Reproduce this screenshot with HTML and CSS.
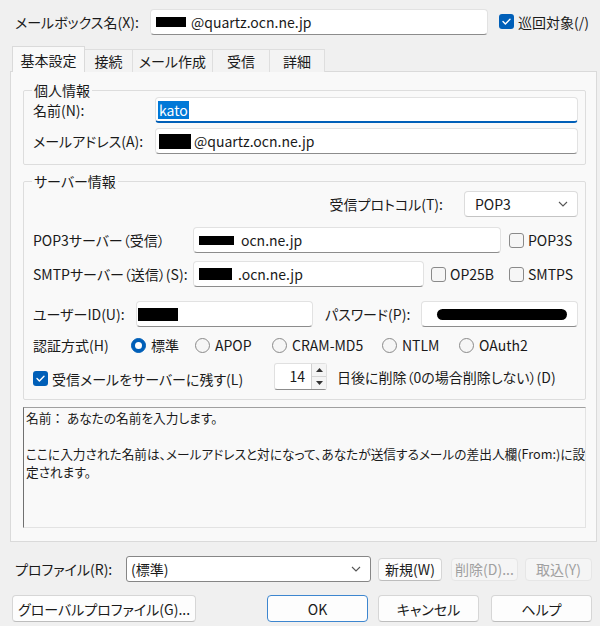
FILE: index.html
```html
<!DOCTYPE html>
<html lang="ja">
<head>
<meta charset="utf-8">
<title>メールボックス</title>
<link rel="stylesheet" href="styles.css">
</head>
<body>
<div class="top-row">
  <span class="mb-lbl">メールボックス名(X):</span>
  <div class="field mb-field"><span class="redact r-mb"></span>@quartz.ocn.ne.jp</div>
  <div class="chk top-chk"><span class="cb on"><svg viewBox="0 0 15 15" width="15" height="15"><polyline points="4,7.6 6.4,10 11,5.2" fill="none" stroke="#fff" stroke-width="1.4" stroke-linecap="round" stroke-linejoin="round"/></svg></span><span>巡回対象(/)</span></div>
</div>

<div class="tabs">
  <div class="tab active">基本設定</div>
  <div class="tab t-conn">接続</div>
  <div class="tab t-comp">メール作成</div>
  <div class="tab t-recv">受信</div>
  <div class="tab t-det">詳細</div>
</div>

<div class="panel">
  <fieldset class="group g1">
    <legend>個人情報</legend>
    <div class="row r-name">
      <span class="lbl w-name">名前(N):</span>
      <div class="field focus grow p-name"><span class="sel">kato</span></div>
    </div>
    <div class="row r-addr">
      <span class="lbl w-name">メールアドレス(A):</span>
      <div class="field grow p-addr"><span class="redact r-addr-b"></span>@quartz.ocn.ne.jp</div>
    </div>
  </fieldset>

  <fieldset class="group g2">
    <legend>サーバー情報</legend>
    <div class="row r-proto">
      <span class="lbl">受信プロトコル(T):</span>
      <div class="select proto-sel"><span>POP3</span><svg class="chev" viewBox="0 0 10 6" width="10" height="6"><polyline points="1,1 5,5 9,1" fill="none" stroke="#555" stroke-width="1.1"/></svg></div>
    </div>
    <div class="row r-pop">
      <span class="lbl w-srv">POP3サーバー（受信）</span>
      <div class="field pop-field"><span class="redact r-pop-b"></span>ocn.ne.jp</div>
      <div class="chk pop3s"><span class="cb"></span><span>POP3S</span></div>
    </div>
    <div class="row r-smtp">
      <span class="lbl w-srv">SMTPサーバー（送信）(S):</span>
      <div class="field smtp-field"><span class="redact r-smtp-b"></span>.ocn.ne.jp</div>
      <div class="chk op25b"><span class="cb"></span><span>OP25B</span></div>
      <div class="chk"><span class="cb"></span><span>SMTPS</span></div>
    </div>
    <div class="row r-user">
      <span class="lbl w-user">ユーザーID(U):</span>
      <div class="field user-field"><span class="redact r-user-b"></span></div>
      <span class="lbl w-pass">パスワード(P):</span>
      <div class="field pass-field"><span class="redact r-pass-b"></span></div>
    </div>
    <div class="row r-auth">
      <span class="lbl w-auth">認証方式(H)</span>
      <div class="radio w-r1"><span class="rb on"></span><span>標準</span></div>
      <div class="radio w-r2"><span class="rb"></span><span>APOP</span></div>
      <div class="radio w-r3"><span class="rb"></span><span>CRAM-MD5</span></div>
      <div class="radio w-r4"><span class="rb"></span><span>NTLM</span></div>
      <div class="radio"><span class="rb"></span><span>OAuth2</span></div>
    </div>
    <div class="row r-leave">
      <div class="chk w-leave"><span class="cb on"><svg viewBox="0 0 15 15" width="15" height="15"><polyline points="4,7.6 6.4,10 11,5.2" fill="none" stroke="#fff" stroke-width="1.4" stroke-linecap="round" stroke-linejoin="round"/></svg></span><span>受信メールをサーバーに残す(L)</span></div>
      <div class="spin">
        <div class="spin-val">14</div>
        <div class="spin-btns">
          <div class="spin-btn"><svg viewBox="0 0 7 4" width="7" height="4"><polygon points="0,4 3.5,0 7,4" fill="#333"/></svg></div>
          <div class="spin-btn"><svg viewBox="0 0 7 4" width="7" height="4"><polygon points="0,0 3.5,4 7,0" fill="#333"/></svg></div>
        </div>
      </div>
      <span class="lbl days">日後に削除（0の場合削除しない）(D)</span>
    </div>
  </fieldset>

  <div class="desc">
    <div class="desc-line"><span class="colon">名前：</span> あなたの名前を入力します。</div>
    <div class="desc-line">&nbsp;</div>
    <div class="desc-line">ここに入力された名前は、メールアドレスと対になって、あなたが送信するメールの差出人欄(From:)に設</div>
    <div class="desc-line">定されます。</div>
  </div>
</div>

<div class="profile-row">
  <span class="lbl w-prof">プロファイル(R):</span>
  <div class="select prof-sel"><span>(標準)</span><svg class="chev" viewBox="0 0 10 6" width="10" height="6"><polyline points="1,1 5,5 9,1" fill="none" stroke="#555" stroke-width="1.1"/></svg></div>
  <div class="btn small b-new">新規(W)</div>
  <div class="btn small disabled b-del">削除(D)...</div>
  <div class="btn small disabled b-imp">取込(Y)</div>
</div>

<div class="button-row">
  <div class="btn b-global">グローバルプロファイル(G)...</div>
  <div class="btn default b-ok">OK</div>
  <div class="btn b-cancel">キャンセル</div>
  <div class="btn b-help">ヘルプ</div>
</div>
</body>
</html>
```

FILE: styles.css
```css
* { box-sizing: border-box; }
html, body { margin: 0; padding: 0; }
body {
  width: 600px;
  height: 626px;
  overflow: hidden;
  background: #f0f0f0;
  color: #1a1a1a;
  font-family: "Noto Sans CJK JP", sans-serif;
  font-size: 14px;
  line-height: 18px;
  font-feature-settings: "palt" 1;
}

/* top row */
.top-row { display: flex; align-items: center; height: 27px; margin-top: 8px; padding-left: 15px; }
.mb-lbl { width: 135px; white-space: nowrap; }
.mb-field { width: 338px; padding-left: 5px; }
.top-chk { margin-left: 11px; }

/* generic controls */
.field {
  display: flex;
  align-items: center;
  height: 26px;
  background: #fff;
  border: 1px solid #e2e2e2;
  border-bottom-color: #8c8c8c;
  border-radius: 4px;
  white-space: nowrap;
  overflow: hidden;
  padding-left: 5px;
}
.field.focus { border-bottom: 2px solid #005fb8; }
.grow { flex: 1; }
.redact { display: inline-block; background: #000; margin-right: 5px; }
.r-mb { width: 30px; height: 10px; }
.r-addr-b { width: 32px; height: 15px; margin-right: 3px; }
.r-pop-b { width: 35px; height: 9px; margin-right: 7px; }
.r-smtp-b { width: 33px; height: 12px; margin-right: 6px; }
.r-user-b { width: 40px; height: 13px; }
.r-pass-b { width: 130px; height: 11px; border-radius: 6px; }
.sel { background: #0078d7; color: #fff; padding: 0 1px; line-height: 18px; }

.lbl { white-space: nowrap; }
.chk, .radio { display: flex; align-items: center; white-space: nowrap; }
.chk .cb { margin-right: 4px; }
.cb {
  width: 15px; height: 15px;
  border: 1px solid #8a8a8a;
  border-radius: 3px;
  background: #f6f6f6;
  display: inline-flex;
  flex: none;
}
.cb.on { background: #005fb8; border: none; }
.cb svg { display: block; }
.rb {
  width: 15px; height: 15px;
  border: 1px solid #8a8a8a;
  border-radius: 50%;
  background: #f6f6f6;
  margin-right: 5px;
  display: flex; align-items: center; justify-content: center;
  flex: none;
}
.rb.on { background: #005fb8; border-color: #005fb8; }
.rb.on::after { content: ""; width: 7px; height: 7px; border-radius: 50%; background: #fff; }

.select {
  display: flex; align-items: center; justify-content: space-between;
  height: 26px;
  background: #fff;
  border: 1px solid #dcdcdc;
  border-bottom-color: #c4c4c4;
  border-radius: 4px;
  padding: 0 9px 0 10px;
}
.chev { display: block; }

/* tabs */
.tabs {
  display: flex; align-items: flex-end;
  height: 25px;
  margin-top: 12px;
  margin-left: 12px;
  margin-bottom: -1px;
  position: relative;
  z-index: 1;
}
.tab {
  height: 23px;
  display: flex; align-items: center; justify-content: center;
  border: 1px solid #dedede;
  border-left: none;
  border-bottom: none;
  background: #f3f3f3;
  white-space: nowrap;
}
.tab.active {
  width: 73px; height: 26px;
  background: #f9f9f9;
  border-left: 1px solid #dadada;
  border-color: #dadada;
}
.t-conn { width: 48px; }
.t-comp { width: 80px; }
.t-recv { width: 57px; }
.t-det { width: 55px; }

/* panel */
.panel {
  margin-left: 10px;
  width: 587px;
  height: 471px;
  background: #f9f9f9;
  border: 1px solid #dadada;
  padding: 11px 10px 12px 12px;
}
.group {
  margin: 0;
  border: 1px solid #dddddd;
  border-radius: 2px;
  padding: 0 7px 10px 9px;
  min-width: 0;
}
.group legend { padding: 0 2px; margin-left: -1px; line-height: 14px; }
.row { display: flex; align-items: center; }
.r-name { margin-top: 0; height: 26px; }
.r-addr { margin-top: 5px; height: 26px; }
.w-name { width: 122px; }
.p-name { padding-left: 2px; }
.p-addr { padding-left: 3px; }

.g2 { margin-top: 9px; padding-bottom: 9px; }
.r-proto { margin-top: 3px; height: 26px; justify-content: flex-end; }
.proto-sel { width: 114px; margin-left: 21px; }
.r-pop { margin-top: 10px; height: 26px; }
.r-smtp { margin-top: 8px; height: 26px; }
.w-srv { width: 160px; }
.pop-field { width: 308px; }
.pop3s { margin-left: 8px; }
.smtp-field { width: 231px; }
.op25b { margin-left: 7px; width: 78px; }
.r-user { margin-top: 14px; height: 26px; }
.w-user { width: 103px; }
.user-field { width: 177px; padding-left: 1px; }
.w-pass { width: 96px; margin-left: 12px; }
.pass-field { width: 157px; padding-left: 15px; }
.r-auth { margin-top: 7px; height: 22px; }
.w-auth { width: 98px; }
.w-r1 { width: 64px; }
.w-r2 { width: 77px; }
.w-r3 { width: 110px; }
.w-r4 { width: 77px; }
.r-leave { margin-top: 7px; height: 27px; }
.w-leave { width: 241px; padding-top: 4px; }
.spin {
  display: flex;
  width: 53px; height: 27px;
  background: #fff;
  border: 1px solid #e0e0e0;
  border-bottom-color: #8c8c8c;
  border-radius: 3px;
}
.spin-val { flex: 1; text-align: right; padding-right: 6px; line-height: 25px; }
.spin-btns { width: 15px; display: flex; flex-direction: column; border-left: 1px solid #d0d0d0; }
.spin-btn { flex: 1; display: flex; align-items: center; justify-content: center; background: #f4f4f4; border-bottom: 1px solid #d6d6d6; }
.spin-btn:last-child { border-bottom: none; }
.spin-btn svg { display: block; }
.days { margin-left: 10px; }

.desc {
  margin-top: 7px;
  height: 121px;
  background: #f9f9f9;
  border: 1px solid #e3e3e3;
  border-top-color: #a0a0a0;
  border-left-color: #707070;
  padding: 1px 2px;
  overflow: hidden;
  font-size: 12.7px;
}
.desc-line { white-space: nowrap; height: 18px; line-height: 18px; }
.colon { font-feature-settings: normal; }

/* bottom */
.profile-row { display: flex; align-items: center; height: 26px; margin-top: 14px; padding-left: 15px; }
.w-prof { width: 111px; }
.prof-sel { width: 245px; border: 1px solid #868686; border-radius: 3px; padding-left: 4px; }
.btn {
  display: flex; align-items: center; justify-content: center;
  background: #fdfdfd;
  border: 1px solid #d6d6d6;
  border-bottom-color: #bdbdbd;
  border-radius: 4px;
  white-space: nowrap;
}
.btn.small { height: 23px; }
.btn.disabled { background: #f5f5f5; color: #a0a0a0; border-color: #e6e6e6; }
.b-new { width: 64px; margin-left: 7px; }
.b-del { width: 67px; margin-left: 9px; }
.b-imp { width: 67px; margin-left: 7px; }

.button-row { display: flex; align-items: center; height: 27px; margin-top: 13px; padding-left: 12px; }
.button-row .btn { height: 27px; }
.b-global { width: 184px; }
.b-ok { width: 101px; margin-left: 71px; }
.btn.default { border: 1px solid #3d86cf; }
.b-cancel { width: 101px; margin-left: 10px; }
.b-help { width: 101px; margin-left: 12px; }
```
